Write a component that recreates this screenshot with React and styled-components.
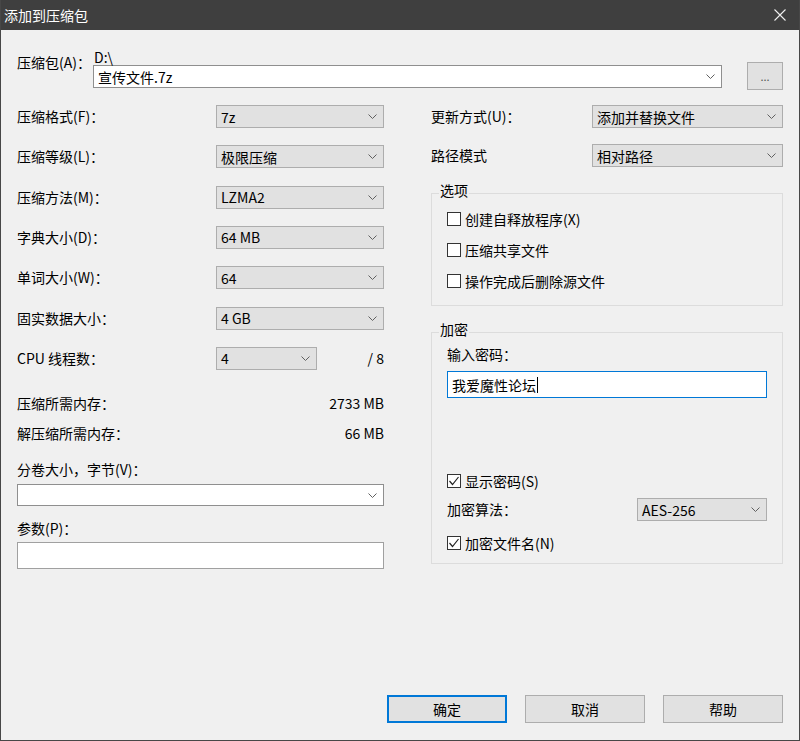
import React from 'react'
import styled, { createGlobalStyle } from 'styled-components'

//---------------------------------------------
//   Global
//---------------------------------------------
const GlobalStyle = createGlobalStyle`
  html, body {
    margin: 0;
    padding: 0;
    background: #f0f0f0;
  }
  * { box-sizing: border-box; }
`

const FONT = `"Noto Sans CJK SC", "Microsoft YaHei", "Liberation Sans", sans-serif`

//---------------------------------------------
//   Styles
//---------------------------------------------
const Window = styled.div`
  width: 800px;
  height: 741px;
  display: flex;
  flex-direction: column;
  background: #f0f0f0;
  border: 1px solid #474747;
  border-top: none;
  font-family: ${FONT};
  font-size: 14px;
  line-height: 16px;
  color: #000;
  overflow: hidden;
`

const TitleBar = styled.div`
  height: 30px;
  flex: none;
  margin: 0 -1px;
  padding: 0 14px 0 4px;
  display: flex;
  align-items: center;
  justify-content: space-between;
  background: #3f3f3f;
  color: #fff;
  font-size: 14px;
`

const Body = styled.div`
  flex: 1;
  display: flex;
  flex-direction: column;
  padding: 16px 16px 17px 16px;
`

const ArchiveRow = styled.div`
  display: grid;
  grid-template-columns: 76px 629px 1fr 36px;
  align-items: start;
`

const Label = styled.div`
  padding-top: ${p => p.$pt || 0}px;
  margin-top: ${p => p.$mt || 0}px;
  white-space: nowrap;
`

const PathText = styled.div`
  padding-top: 3px;
  padding-left: 1px;
`

const Combo = styled.div`
  width: ${p => (p.$w ? `${p.$w}px` : '100%')};
  height: ${p => p.$h || 23}px;
  margin-top: ${p => p.$mt || 0}px;
  flex: none;
  display: flex;
  align-items: center;
  justify-content: space-between;
  padding: 0 6px 0 4px;
  background: ${p => (p.$editable ? '#fff' : '#e1e1e1')};
  border: 1px solid ${p => (p.$editable ? '#8f8f8f' : '#adadad')};
  white-space: nowrap;
`

const Chevron = () => (
  <svg width="9" height="5" viewBox="0 0 9 5">
    <polyline points="0.5,0.5 4.5,4.5 8.5,0.5" fill="none" stroke="#606060" strokeWidth="1" />
  </svg>
)

const SmallButton = styled.div`
  margin-top: 16px;
  width: 36px;
  height: 28px;
  display: flex;
  align-items: center;
  justify-content: center;
  background: #e1e1e1;
  border: 1px solid #adadad;
  color: #555;
  font-size: 11px;
`

const Columns = styled.div`
  margin-top: 15px;
  display: grid;
  grid-template-columns: 367px 352px;
  column-gap: 47px;
  align-items: start;
`

const Column = styled.div`
  display: flex;
  flex-direction: column;
`

const FieldRow = styled.div`
  display: flex;
  align-items: center;
  height: 23px;
  margin-top: ${p => p.$mt || 0}px;
`

const FieldLabel = styled.div`
  width: ${p => p.$w}px;
  flex: none;
  padding-bottom: 1px;
  white-space: nowrap;
`

const Aside = styled.div`
  flex: 1;
  text-align: right;
`

const InfoRow = styled.div`
  display: flex;
  justify-content: space-between;
  margin-top: ${p => p.$mt || 0}px;
`

const TextBox = styled.div`
  height: ${p => p.$h || 26}px;
  margin-top: ${p => p.$mt || 0}px;
  display: flex;
  align-items: center;
  padding: 0 4px;
  background: #fff;
  border: 1px solid ${p => (p.$focus ? '#0078d7' : '#a0a0a0')};
`

const Caret = styled.span`
  display: inline-block;
  width: 1px;
  height: 16px;
  background: #000;
  margin-left: 1px;
`

const Group = styled.fieldset`
  margin: ${p => p.$mt || 0}px 0 0 0;
  padding: 0 15px ${p => p.$pb || 16}px 15px;
  border: 1px solid #dcdcdc;
  min-width: 0;
`

const Legend = styled.legend`
  margin-left: -8px;
  padding: 0 1px 6px 1px;
  line-height: 16px;
`

const CheckRow = styled.div`
  display: flex;
  align-items: center;
  gap: 4px;
  height: 16px;
  margin-top: ${p => p.$mt || 0}px;
`

const Box = styled.span`
  width: 14px;
  height: 14px;
  flex: none;
  display: flex;
  align-items: center;
  justify-content: center;
  background: #fff;
  border: 1px solid #333;
`

const Check = ({ checked, label, mt }) => (
  <CheckRow $mt={mt}>
    <Box>
      {checked && (
        <svg width="12" height="12" viewBox="0 0 12 12">
          <polyline points="1.5,6 4.5,9.5 10.5,2" fill="none" stroke="#222" strokeWidth="1.2" />
        </svg>
      )}
    </Box>
    <span>{label}</span>
  </CheckRow>
)

const Footer = styled.div`
  margin-top: auto;
  display: flex;
  justify-content: flex-end;
  gap: 18px;
`

const Button = styled.div`
  width: 120px;
  height: 28px;
  display: flex;
  align-items: center;
  justify-content: center;
  background: #e1e1e1;
  border: 1px solid ${p => (p.$default ? '#0078d7' : '#adadad')};
  box-shadow: ${p => (p.$default ? 'inset 0 0 0 1px #0078d7' : 'none')};
`

//---------------------------------------------
//   Data
//---------------------------------------------
const leftFields = [
  ['压缩格式(F)：', '7z'],
  ['压缩等级(L)：', '极限压缩'],
  ['压缩方法(M)：', 'LZMA2'],
  ['字典大小(D)：', '64 MB'],
  ['单词大小(W)：', '64'],
  ['固实数据大小：', '4 GB'],
]

// ---------------------------------------------
//   Return
//---------------------------------------------
const App = () => {
  return (
    <>
      <GlobalStyle />
      <Window>
        <TitleBar>
          <span>添加到压缩包</span>
          <svg width="12" height="12" viewBox="0 0 12 12">
            <path d="M0.5 0.5 L11.5 11.5 M11.5 0.5 L0.5 11.5" stroke="#f0f0f0" strokeWidth="1.1" />
          </svg>
        </TitleBar>

        <Body>
          <ArchiveRow>
            <Label $pt={8}>压缩包(A)：</Label>
            <div>
              <PathText>D:\</PathText>
              <Combo $editable>
                <span>宣传文件.7z</span>
                <Chevron />
              </Combo>
            </div>
            <div />
            <SmallButton>...</SmallButton>
          </ArchiveRow>

          <Columns>
            <Column>
              {leftFields.map(([label, value], i) => (
                <FieldRow key={label} $mt={i ? 17.33 : 0}>
                  <FieldLabel $w={199}>{label}</FieldLabel>
                  <Combo $w={168}>
                    <span>{value}</span>
                    <Chevron />
                  </Combo>
                </FieldRow>
              ))}
              <FieldRow $mt={17.33}>
                <FieldLabel $w={199}>CPU 线程数：</FieldLabel>
                <Combo $w={101}>
                  <span>4</span>
                  <Chevron />
                </Combo>
                <Aside>/ 8</Aside>
              </FieldRow>

              <InfoRow $mt={25}>
                <span>压缩所需内存：</span>
                <span>2733 MB</span>
              </InfoRow>
              <InfoRow $mt={14}>
                <span>解压缩所需内存：</span>
                <span>66 MB</span>
              </InfoRow>

              <Label $mt={20}>分卷大小，字节(V)：</Label>
              <Combo $editable $h={22.5} $mt={7}>
                <span />
                <Chevron />
              </Combo>

              <Label $mt={14}>参数(P)：</Label>
              <TextBox $mt={6} $h={26.5} />
            </Column>

            <Column>
              <FieldRow>
                <FieldLabel $w={161}>更新方式(U)：</FieldLabel>
                <Combo $w={191}>
                  <span>添加并替换文件</span>
                  <Chevron />
                </Combo>
              </FieldRow>
              <FieldRow $mt={16}>
                <FieldLabel $w={161}>路径模式</FieldLabel>
                <Combo $w={191}>
                  <span>相对路径</span>
                  <Chevron />
                </Combo>
              </FieldRow>

              <Group $mt={15}>
                <Legend>选项</Legend>
                <Check label="创建自释放程序(X)" mt={7} />
                <Check label="压缩共享文件" mt={15} />
                <Check label="操作完成后删除源文件" mt={15} />
              </Group>

              <Group $mt={15} $pb={12}>
                <Legend>加密</Legend>
                <Label $mt={3}>输入密码：</Label>
                <TextBox $focus $mt={9} $h={27}>
                  <span>我爱魔性论坛</span>
                  <Caret />
                </TextBox>
                <Check checked label="显示密码(S)" mt={75} />
                <FieldRow $mt={9}>
                  <FieldLabel $w={190}>加密算法：</FieldLabel>
                  <Combo $w={130}>
                    <span>AES-256</span>
                    <Chevron />
                  </Combo>
                </FieldRow>
                <Check checked label="加密文件名(N)" mt={14} />
              </Group>
            </Column>
          </Columns>

          <Footer>
            <Button $default>确定</Button>
            <Button>取消</Button>
            <Button>帮助</Button>
          </Footer>
        </Body>
      </Window>
    </>
  )
}

export default App
